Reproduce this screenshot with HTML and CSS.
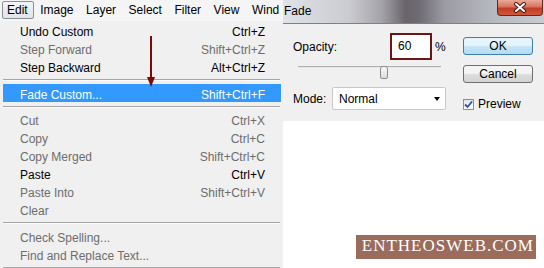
FILE: index.html
```html
<!DOCTYPE html>
<html lang="en">
<head>
  <meta charset="UTF-8" />
  <title>Fade</title>
  <link rel="stylesheet" href="styles.css">
</head>
<body>
  <div class="screen">
    <div class="menu">
      <div class="menubar">
        <span class="top active">Edit</span>
        <span class="top">Image</span>
        <span class="top">Layer</span>
        <span class="top">Select</span>
        <span class="top">Filter</span>
        <span class="top">View</span>
        <span class="top">Wind</span>
      </div>
      <div class="dropdown">
        <div class="item"><span>Undo Custom</span><span>Ctrl+Z</span></div>
        <div class="item off"><span>Step Forward</span><span>Shift+Ctrl+Z</span></div>
        <div class="item"><span>Step Backward</span><span>Alt+Ctrl+Z</span></div>
        <div class="sep"></div>
        <div class="item hot"><span>Fade Custom...</span><span>Shift+Ctrl+F</span></div>
        <div class="sep"></div>
        <div class="item off"><span>Cut</span><span>Ctrl+X</span></div>
        <div class="item off"><span>Copy</span><span>Ctrl+C</span></div>
        <div class="item off"><span>Copy Merged</span><span>Shift+Ctrl+C</span></div>
        <div class="item"><span>Paste</span><span>Ctrl+V</span></div>
        <div class="item off"><span>Paste Into</span><span>Shift+Ctrl+V</span></div>
        <div class="item off"><span>Clear</span><span></span></div>
        <div class="sep"></div>
        <div class="item off"><span>Check Spelling...</span><span></span></div>
        <div class="item off"><span>Find and Replace Text...</span><span></span></div>
        <div class="sep"></div>
      </div>

      <!-- red pointer drawn over the menu -->
      <svg class="arrow" width="10" height="52" viewBox="0 0 10 52">
        <line x1="5" y1="0" x2="5" y2="43" stroke="#7c0a0a" stroke-width="2"/>
        <polygon points="1,41 9,41 5,51" fill="#7c0a0a"/>
      </svg>
    </div>

    <div class="side">
      <div class="dialog">
        <div class="titlebar">
          <span class="title">Fade</span>
          <span class="close">
            <svg width="14" height="11" viewBox="0 0 14 11">
              <path d="M3 2 L11 9 M11 2 L3 9" stroke="#4a1a14" stroke-width="4" stroke-linecap="round"/>
              <path d="M3 2 L11 9 M11 2 L3 9" stroke="#fff" stroke-width="2" stroke-linecap="round"/>
            </svg>
          </span>
        </div>
        <div class="dlg-body">
          <div class="controls">
            <div class="opacity-row">
              <span class="label-opacity">Opacity:</span>
              <span class="num-box">60</span>
              <span class="pct">%</span>
            </div>
            <div class="slider">
              <div class="track"></div>
              <div class="thumb"></div>
            </div>
            <div class="mode-row">
              <span class="label-mode">Mode:</span>
              <div class="select">
                <span>Normal</span>
                <span class="caret"></span>
              </div>
            </div>
          </div>
          <div class="buttons">
            <div class="btn ok">OK</div>
            <div class="btn">Cancel</div>
            <label class="preview">
              <span class="check">
                <svg width="9" height="9" viewBox="0 0 9 9">
                  <path d="M1 4.5 L3.5 7 L8 1.5" fill="none" stroke="#2b4fb0" stroke-width="1.8"/>
                </svg>
              </span>
              Preview
            </label>
          </div>
        </div>
      </div>
      <div class="canvas">
        <div class="badge">ENTHEOSWEB.COM</div>
      </div>
    </div>
  </div>
</body>
</html>
```

FILE: styles.css
```css
body {
  margin: 0;
  width: 544px;
  height: 268px;
  overflow: hidden;
  background: #f0f0f0;
  font-family: "Liberation Sans", Arial, sans-serif;
  font-size: 12px;
  color: #000;
}
.screen {
  display: flex;
  height: 268px;
}

/* left: photoshop edit menu */
.menu {
  position: relative;
  width: 283px;
  flex: none;
}
.menubar {
  display: flex;
  gap: 0.5px;
  height: 21px;
  padding-left: 2px;
  background: #f5f5f5;
  overflow: hidden;
  white-space: nowrap;
}
.top {
  height: 18px;
  margin-top: 1px;
  line-height: 18px;
  padding: 0 6px;
}
.top.active {
  padding: 0 5px 0 4px;
  border: 1px solid #8e8f8f;
  border-radius: 2px;
  height: 16px;
  line-height: 16px;
  background: linear-gradient(#f3f5f8, #dfe5ed);
}
.item {
  display: flex;
  justify-content: space-between;
  height: 16px;
  padding: 2px 16px 0 17px;
  margin: 0 2px 0 3px;
  line-height: 18px;
  white-space: nowrap;
}
.item.off {
  color: #6d6d6d;
}
.item.hot {
  background: #3399ff;
  color: #fff;
}
.sep {
  height: 1px;
  margin: 4px 3px 3.6px 3px;
  background: #a6a6a6;
  box-shadow: 0 1px 0 #fbfbfb;
}
.arrow {
  position: absolute;
  left: 146px;
  top: 36px;
}

/* right: fade dialog */
.side {
  flex: 1;
  display: flex;
  flex-direction: column;
}
.dialog {
  height: 121px;
  background: #f0f0f0;
}
.titlebar {
  display: flex;
  justify-content: space-between;
  height: 23px;
  border-bottom: 1px solid #808080;
  background: linear-gradient(90deg, #dfe2e8 0%, #cbccd1 25%, #a4a2a8 38%, #68646a 47%, #6e6b72 52%, #9c9ba3 62%, #b6b8c0 80%, #c9ccd3 100%);
}
.title {
  padding-left: 1px;
  line-height: 23px;
}
.close {
  display: flex;
  align-items: center;
  justify-content: center;
  width: 44px;
  height: 15px;
  margin-right: 1px;
  border: 1px solid #5d2a22;
  border-top: none;
  border-radius: 0 0 4px 4px;
  background: linear-gradient(#eaa998, #d7735f 45%, #c13c25 55%, #d0573a);
}
.dlg-body {
  display: flex;
  gap: 17px;
  padding-left: 10px;
}
.controls {
  width: 153px;
}
.opacity-row {
  display: flex;
  align-items: center;
  height: 27px;
  margin-top: 9px;
}
.label-opacity {
  width: 97px;
}
.num-box {
  box-sizing: border-box;
  width: 42px;
  height: 27px;
  padding-left: 6px;
  line-height: 23px;
  border: 2px solid #6d1414;
  background: #fff;
}
.pct {
  margin-left: 3px;
}
.slider {
  position: relative;
  width: 143px;
  height: 14px;
  margin: 5px 0 0 5px;
}
.track {
  height: 0;
  margin-top: 6px;
  border-top: 1px solid #b0b0b0;
  border-bottom: 1px solid #e6e6e6;
}
.thumb {
  position: absolute;
  left: 82px;
  top: 0;
  width: 6px;
  height: 11px;
  border: 1px solid #8c8c8c;
  border-radius: 3px 3px 2px 2px;
  background: linear-gradient(#fafafa, #dcdcdc);
}
.mode-row {
  display: flex;
  align-items: center;
  margin-top: 7px;
}
.label-mode {
  width: 39px;
}
.select {
  box-sizing: border-box;
  display: flex;
  justify-content: space-between;
  align-items: center;
  width: 114px;
  height: 23px;
  padding: 0 5px 0 6px;
  background: #fff;
  border: 1px solid #c9c9c9;
  border-radius: 2px;
}
.caret {
  width: 0;
  height: 0;
  border-left: 3.5px solid transparent;
  border-right: 3.5px solid transparent;
  border-top: 4px solid #000;
}
.buttons {
  display: flex;
  flex-direction: column;
  width: 70px;
  padding-top: 13px;
}
.btn {
  box-sizing: border-box;
  height: 18px;
  line-height: 16px;
  text-align: center;
  border: 1px solid #707070;
  border-radius: 3px;
  background: linear-gradient(#f4f4f4 45%, #dcdcdc 55%, #d3d3d3);
  margin-bottom: 10px;
}
.btn.ok {
  border-color: #3c7fb1;
  background: linear-gradient(#e6f5fd 45%, #c4e5f7 55%, #b4dcf3);
}
.preview {
  display: flex;
  align-items: center;
  gap: 4px;
  height: 12px;
  margin-top: 5px;
}
.check {
  box-sizing: border-box;
  display: flex;
  align-items: center;
  justify-content: center;
  width: 11px;
  height: 11px;
  border: 1px solid #8e8f8f;
  background: linear-gradient(#e4e4e4, #fff);
}

/* watermark area */
.canvas {
  flex: 1;
  display: flex;
  justify-content: flex-end;
  align-items: flex-end;
  padding: 0 8px 9px 0;
  background: #fff;
}
.badge {
  height: 24px;
  padding: 0 2px 0 6px;
  line-height: 22px;
  background: #9b6b5b;
  color: #fff;
  font-family: "Liberation Serif", "Times New Roman", serif;
  font-size: 17px;
  letter-spacing: 1px;
}
```
